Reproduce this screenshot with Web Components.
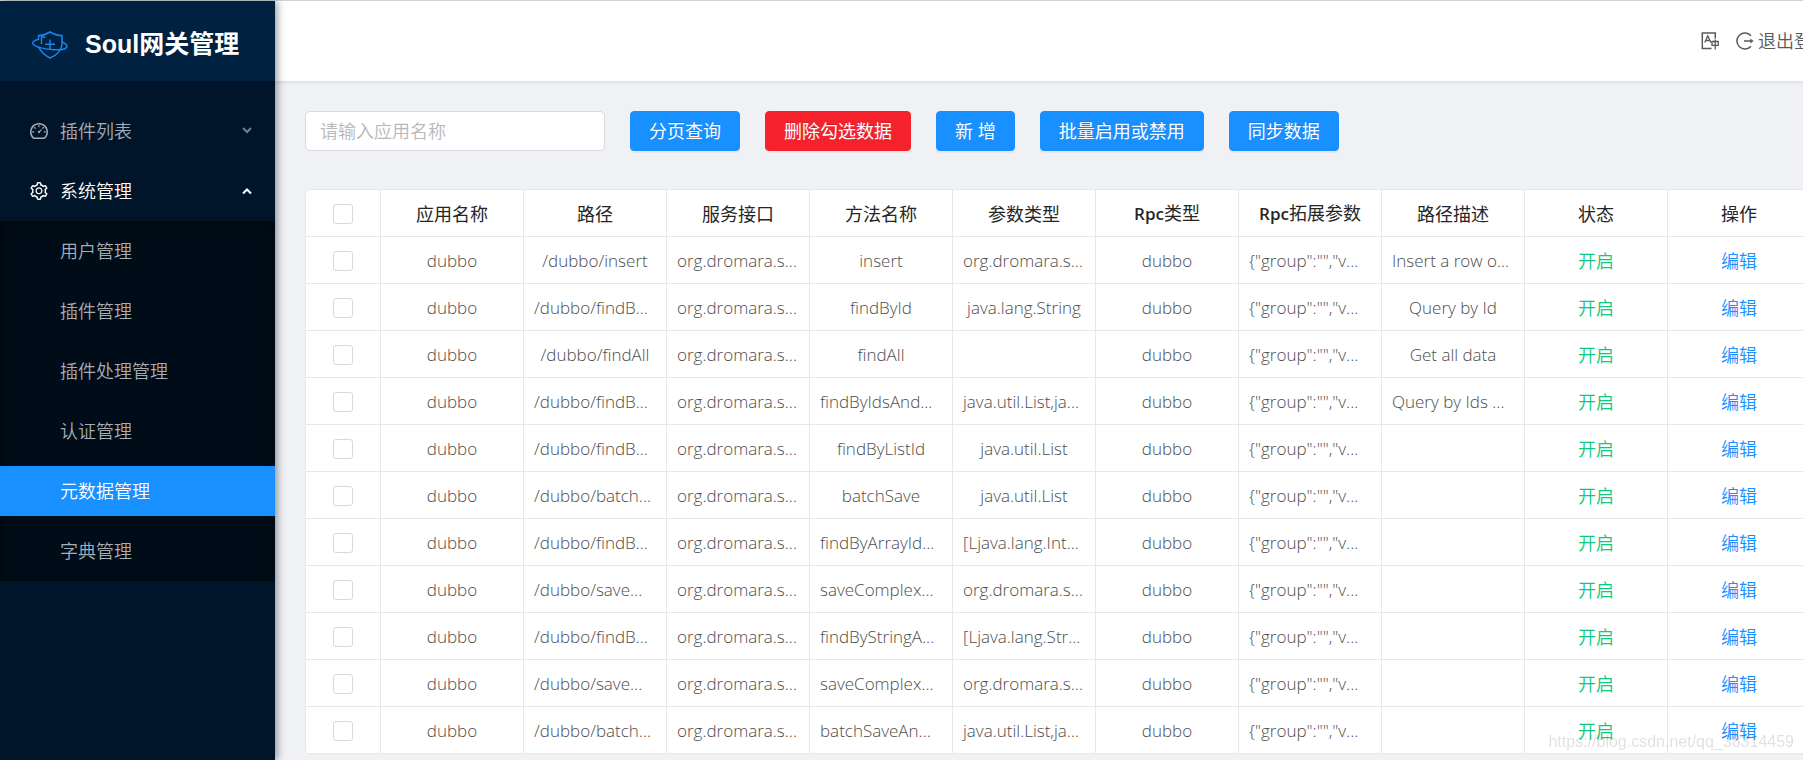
<!DOCTYPE html>
<html lang="zh-CN">
<head>
<meta charset="utf-8">
<title>Soul网关管理</title>
<style>
  body { margin: 0; overflow-x: hidden; background: #f0f1f5; color: #595959; font: 350 18px/26px "Open Sans", "Noto Sans CJK SC", sans-serif; }
</style>
</head>
<body>
<soul-app>
  <soul-sider slot="sider"></soul-sider>
  <soul-header slot="header"></soul-header>
  <soul-toolbar></soul-toolbar>
  <meta-table></meta-table>
</soul-app>
<soul-watermark>https://blog.csdn.net/qq_38314459</soul-watermark>

<script>
const define = (name, html, setup) => {
  const tpl = document.createElement('template');
  tpl.innerHTML = html;
  customElements.define(name, class extends HTMLElement {
    constructor() {
      super();
      this.attachShadow({ mode: 'open' }).append(tpl.content.cloneNode(true));
      if (setup) setup(this.shadowRoot, this);
    }
  });
};

const ICONS = {
  dashboard: '<svg viewBox="64 64 896 896" fill="currentColor"><path d="M924.8 385.6a446.7 446.7 0 0 0-96-142.4 446.7 446.7 0 0 0-142.4-96C631.1 123.8 572.5 112 512 112s-119.1 11.8-174.4 35.2a446.7 446.7 0 0 0-142.4 96 446.7 446.7 0 0 0-96 142.4C75.8 440.9 64 499.5 64 560c0 132.7 58.3 257.7 159.9 343.1l1.7 1.4c5.8 4.8 13.1 7.5 20.6 7.5h531.7c7.5 0 14.8-2.7 20.6-7.5l1.7-1.4C901.7 817.7 960 692.7 960 560c0-60.5-11.9-119.1-35.2-174.4zM761.4 836H262.6A371.12 371.12 0 0 1 140 560c0-99.4 38.7-192.8 109-263 70.3-70.3 163.7-109 263-109 99.4 0 192.8 38.7 263 109 70.3 70.3 109 163.7 109 263 0 105.6-44.5 205.5-122.6 276zM623.5 421.5a8.03 8.03 0 0 0-11.3 0L527.7 506c-18.7-5-39.4-.2-54.1 14.5a55.95 55.95 0 0 0 0 79.2 55.95 55.95 0 0 0 79.2 0 55.87 55.87 0 0 0 14.5-54.1l84.5-84.5c3.1-3.1 3.1-8.2 0-11.3l-28.3-28.3zM490 320h44c4.4 0 8-3.6 8-8v-80c0-4.4-3.6-8-8-8h-44c-4.4 0-8 3.6-8 8v80c0 4.4 3.6 8 8 8zm260 218v44c0 4.4 3.6 8 8 8h80c4.4 0 8-3.6 8-8v-44c0-4.4-3.6-8-8-8h-80c-4.4 0-8 3.6-8 8zm12.7-197.2l-31.1-31.1a8.03 8.03 0 0 0-11.3 0l-56.6 56.6a8.03 8.03 0 0 0 0 11.3l31.1 31.1c3.1 3.1 8.2 3.1 11.3 0l56.6-56.6c3.1-3.1 3.1-8.2 0-11.3zm-458.6-31.1a8.03 8.03 0 0 0-11.3 0l-31.1 31.1a8.03 8.03 0 0 0 0 11.3l56.6 56.6c3.1 3.1 8.2 3.1 11.3 0l31.1-31.1c3.1-3.1 3.1-8.2 0-11.3l-56.6-56.6zM262 530h-80c-4.4 0-8 3.6-8 8v44c0 4.4 3.6 8 8 8h80c4.4 0 8-3.6 8-8v-44c0-4.4-3.6-8-8-8z"/></svg>',
  setting: '<svg viewBox="64 64 896 896" fill="currentColor"><path d="M924.8 625.7l-65.5-56c3.1-19 4.7-38.4 4.7-57.8s-1.6-38.8-4.7-57.8l65.5-56a32.03 32.03 0 0 0 9.3-35.2l-.9-2.6a443.74 443.74 0 0 0-79.7-137.9l-1.8-2.1a32.12 32.12 0 0 0-35.1-9.5l-81.3 28.9c-30-24.6-63.5-44-99.7-57.6l-15.7-85a32.05 32.05 0 0 0-25.8-25.7l-2.7-.5c-52.1-9.4-106.9-9.4-159 0l-2.7.5a32.05 32.05 0 0 0-25.8 25.7l-15.8 85.4a351.86 351.86 0 0 0-99 57.4l-81.9-29.1a32 32 0 0 0-35.1 9.5l-1.8 2.1a446.02 446.02 0 0 0-79.7 137.9l-.9 2.6c-4.5 12.5-.8 26.5 9.3 35.2l66.3 56.6c-3.1 18.8-4.6 38-4.6 57.1 0 19.2 1.5 38.4 4.6 57.1L99 625.5a32.03 32.03 0 0 0-9.3 35.2l.9 2.6c18.1 50.4 44.9 96.9 79.7 137.9l1.8 2.1a32.12 32.12 0 0 0 35.1 9.5l81.9-29.1c29.8 24.5 63.1 43.9 99 57.4l15.8 85.4a32.05 32.05 0 0 0 25.8 25.7l2.7.5a449.4 449.4 0 0 0 159 0l2.7-.5a32.05 32.05 0 0 0 25.8-25.7l15.7-85a350 350 0 0 0 99.7-57.6l81.3 28.9a32 32 0 0 0 35.1-9.5l1.8-2.1c34.8-41.1 61.6-87.5 79.7-137.9l.9-2.6c4.5-12.3.8-26.3-9.3-35zM788.3 465.9c2.5 15.1 3.8 30.6 3.8 46.1s-1.3 31-3.8 46.1l-6.6 40.1 74.7 63.9a370.03 370.03 0 0 1-42.6 73.6L721 702.8l-31.4 25.8c-23.9 19.6-50.5 35-79.3 45.8l-38.1 14.3-17.9 97a377.5 377.5 0 0 1-85 0l-17.9-97.2-37.8-14.5c-28.5-10.8-55-26.2-78.7-45.7l-31.4-25.9-93.4 33.2c-17-22.9-31.2-47.6-42.6-73.6l75.5-64.5-6.5-40c-2.4-14.9-3.7-30.3-3.7-45.5 0-15.3 1.2-30.6 3.7-45.5l6.5-40-75.5-64.5c11.3-26.1 25.6-50.7 42.6-73.6l93.4 33.2 31.4-25.9c23.7-19.5 50.2-34.9 78.7-45.7l37.9-14.3 17.9-97.2c28.1-3.2 56.8-3.2 85 0l17.9 97 38.1 14.3c28.7 10.8 55.4 26.2 79.3 45.8l31.4 25.8 92.8-32.9c17 22.9 31.2 47.6 42.6 73.6L781.8 426l6.5 39.9zM512 326c-97.2 0-176 78.8-176 176s78.8 176 176 176 176-78.8 176-176-78.8-176-176-176zm79.2 255.2A111.6 111.6 0 0 1 512 614c-29.9 0-58-11.7-79.2-32.8A111.6 111.6 0 0 1 400 502c0-29.9 11.7-58 32.8-79.2C454 401.6 482.1 390 512 390c29.9 0 58 11.6 79.2 32.8A111.6 111.6 0 0 1 624 502c0 29.9-11.7 58-32.8 79.2z"/></svg>'
};

define('soul-app', `
<style>
  :host { display: flex; min-width: 1841px; min-height: 100vh; box-sizing: border-box; border-top: 1px solid #d9dade; }
  .main { flex: 1; min-width: 0; display: flex; flex-direction: column; }
  main { padding: 30px 30px 6px; }
</style>
<slot name="sider"></slot>
<div class="main"><slot name="header"></slot><main><slot></slot></main></div>`);

define('soul-sider', `
<style>
  :host { display: block; flex: none; width: 275px; background: #001529; box-shadow: 2px 0 8px rgba(0,21,41,.45); position: relative; z-index: 1; }
  .brand { display: flex; align-items: center; gap: 17px; height: 80px; padding: 0 32px; background: #002140; }
  .brand svg { width: 36px; height: 28px; margin-top: 8px; }
  h1 { margin: 0; color: #fff; font: bold 25px/30px "Liberation Sans", "Noto Sans CJK SC", sans-serif; padding-top: 6px; }
  nav { display: flex; flex-direction: column; padding: 20px 0; }
</style>
<div class="brand">
  <svg viewBox="0 0 36 28" fill="none" stroke="#1786ec" stroke-width="1.5">
    <path d="M6.500 9V4.500Q12.500 4.500 18 1Q23.500 4.500 30 4.500V13Q29.500 22 18 27Q9 22.500 6.500 15.500"/>
    <path d="M6.500 8.500C2 9.500 .5 11 .8 12.500C2 16 14 18.500 22 18.800C30 19 35 18 35 15.500C35 13.500 32.500 12 30 11"/>
    <path d="M9.500 13V6H13.500M18 8.500V18M13 13.200H23"/>
  </svg>
  <h1>Soul网关管理</h1>
</div>
<nav>
  <sider-group icon="dashboard" label="插件列表"></sider-group>
  <sider-group icon="setting" label="系统管理" open>
    <sider-item>用户管理</sider-item>
    <sider-item>插件管理</sider-item>
    <sider-item>插件处理管理</sider-item>
    <sider-item>认证管理</sider-item>
    <sider-item active>元数据管理</sider-item>
    <sider-item>字典管理</sider-item>
  </sider-group>
</nav>`);

customElements.define('sider-group', class extends HTMLElement {
  connectedCallback() {
    if (this.shadowRoot) return;
    const open = this.hasAttribute('open');
    this.attachShadow({ mode: 'open' }).innerHTML = `
<style>
  :host { display: block; color: #a6adb4; }
  :host([open]) { color: #fff; }
  button { display: flex; align-items: center; gap: 12px; width: 100%; height: 50px; margin: 5px 0; padding: 0 22px 0 30px; border: 0; background: none; color: inherit; font: inherit; text-align: left; }
  button svg { width: 18px; height: 18px; flex: none; }
  span { flex: 1; }
  button svg.arrow { width: 12px; height: 12px; opacity: .7; }
  :host([open]) svg.arrow { opacity: 1; }
  .sub { display: flex; flex-direction: column; gap: 10px; padding: 5px 0; background: #000c17; box-shadow: inset 0 2px 8px rgba(0,0,0,.45); }
</style>
<button type="button" aria-expanded="${open}">${ICONS[this.getAttribute('icon')]}<span>${this.getAttribute('label')}</span>
<svg class="arrow" viewBox="0 0 12 12" fill="none" stroke="currentColor" stroke-width="2"><path d="${open ? 'M2 8.500L6 4.500L10 8.500' : 'M2 3L6 7L10 3'}"/></svg></button>
${open ? '<div class="sub"><slot></slot></div>' : ''}`;
  }
});

define('sider-item', `
<style>
  :host { display: block; }
  a { display: block; padding: 0 60px; line-height: 50px; color: #a6adb4; text-decoration: none; }
  :host([active]) a { background: #1890ff; color: #fff; }
</style>
<a href="#"><slot></slot></a>`);

define('soul-header', `
<style>
  :host { display: flex; align-items: center; justify-content: flex-end; gap: 17px; height: 80px; padding-right: 11px; box-sizing: border-box; background: #fff; box-shadow: 0 1px 4px rgba(0,21,41,.12); }
  button { display: flex; align-items: center; gap: 4px; padding: 0; border: 0; background: none; color: #595959; font: inherit; }
  svg { width: 18px; height: 18px; }
</style>
<button type="button" aria-label="语言">
  <svg viewBox="0 0 18 18" fill="none" stroke="currentColor"><path stroke-width="1.500" d="M14.300 6.500V1H1.300V16.500H10.500"/><path stroke-width="1.300" d="M3.800 10.500L6.800 3.800L9.800 10.500M5 8.500H8.600M11 9.500H17.300V13.300H11ZM14.200 7.500V17.500"/></svg>
</button>
<button type="button">
  <svg viewBox="0 0 18 18" fill="none" stroke="currentColor" stroke-width="1.500"><path d="M15 3.800A8 8 0 1 0 15 14.200"/><path d="M8 9H15"/><path d="M14.300 6.600L17.600 9L14.300 11.400Z" fill="currentColor" stroke="none"/></svg>
  <span>退出登录</span>
</button>`);

define('soul-button', `
<style>
  :host { display: block; }
  button { height: 40px; padding: 0 18px; border: 1px solid #1890ff; border-radius: 4px; background: #1890ff; color: #fff; font: inherit; font-weight: 400; white-space: nowrap; text-shadow: 0 -1px 0 rgba(0,0,0,.12); box-shadow: 0 2px 0 rgba(0,0,0,.04); }
  :host([danger]) button { background: #f5222d; border-color: #f5222d; }
</style>
<button type="button"><slot></slot></button>`);

define('soul-toolbar', `
<style>
  :host { display: flex; gap: 25px; margin-bottom: 38px; }
  input { width: 300px; height: 40px; box-sizing: border-box; padding: 0 14px; border: 1px solid #d9d9d9; border-radius: 5px; background: #fff; font: inherit; color: #595959; }
  input::placeholder { color: #b8b8b8; }
</style>
<input type="text" aria-label="应用名称" placeholder="请输入应用名称">
<soul-button>分页查询</soul-button>
<soul-button danger>删除勾选数据</soul-button>
<soul-button>新 增</soul-button>
<soul-button>批量启用或禁用</soul-button>
<soul-button>同步数据</soul-button>`);

const HEADS = ['应用名称', '路径', '服务接口', '方法名称', '参数类型', '<b>Rpc</b>类型', '<b>Rpc</b>拓展参数', '路径描述', '状态', '操作'];
const ROWS = [
  ['/dubbo/insert', 'insert', 'org.dromara.s...', 'Insert a row o...'],
  ['/dubbo/findB...', 'findById', 'java.lang.String', 'Query by Id'],
  ['/dubbo/findAll', 'findAll', '', 'Get all data'],
  ['/dubbo/findB...', 'findByIdsAnd...', 'java.util.List,ja...', 'Query by Ids ...'],
  ['/dubbo/findB...', 'findByListId', 'java.util.List', ''],
  ['/dubbo/batch...', 'batchSave', 'java.util.List', ''],
  ['/dubbo/findB...', 'findByArrayId...', '[Ljava.lang.Int...', ''],
  ['/dubbo/save...', 'saveComplex...', 'org.dromara.s...', ''],
  ['/dubbo/findB...', 'findByStringA...', '[Ljava.lang.Str...', ''],
  ['/dubbo/save...', 'saveComplex...', 'org.dromara.s...', ''],
  ['/dubbo/batch...', 'batchSaveAn...', 'java.util.List,ja...', '']
];

define('meta-table', `
<style>
  :host { display: block; }
  table { width: 100%; table-layout: fixed; border-collapse: separate; border-spacing: 0; border: 1px solid #e8e8e8; border-width: 1px 0 0 1px; border-radius: 5px; background: #fff; overflow: hidden; }
  th, td { height: 45px; padding: 1px 10px 0; border: 1px solid #e8e8e8; border-width: 0 1px 1px 0; text-align: center; white-space: nowrap; }
  th { color: #262626; font-weight: 400; }
  b { font-size: 17px; font-weight: 600; }
  .check { width: 54px; }
  td { font-size: 17px; color: #4d4d4d; }
  td.cut { text-align: left; }
  td.cjk { font-size: 18px; }
  td.on { color: #0ec97f; }
  a { color: #1890ff; text-decoration: none; }
  input { appearance: none; display: block; width: 20px; height: 20px; margin: 0 auto; border: 1px solid #d9d9d9; border-radius: 3px; background: #fff; }
</style>
<table><thead><tr></tr></thead><tbody></tbody></table>`, root => {
  const box = label => `<input type="checkbox" aria-label="${label}">`;
  root.querySelector('thead tr').innerHTML =
    `<th class="check">${box('全选')}</th>` + HEADS.map(h => `<th>${h}</th>`).join('');
  root.querySelector('tbody').innerHTML = ROWS.map(([path, method, params, desc]) => {
    const cells = ['dubbo', path, 'org.dromara.s...', method, params, 'dubbo', '{"group":"","v...', desc];
    return `<tr><td>${box('选择')}</td>` +
      cells.map(c => `<td${c.endsWith('...') ? ' class="cut"' : ''}>${c}</td>`).join('') +
      '<td class="cjk on">开启</td><td class="cjk"><a href="#">编辑</a></td></tr>';
  }).join('');
});

define('soul-watermark', `
<style>
  :host { position: fixed; right: 9px; bottom: 6px; z-index: 2; font: 16px/24px "Liberation Sans", sans-serif; color: rgba(0,0,0,.12); pointer-events: none; }
</style>
<slot></slot>`);
</script>
</body>
</html>
